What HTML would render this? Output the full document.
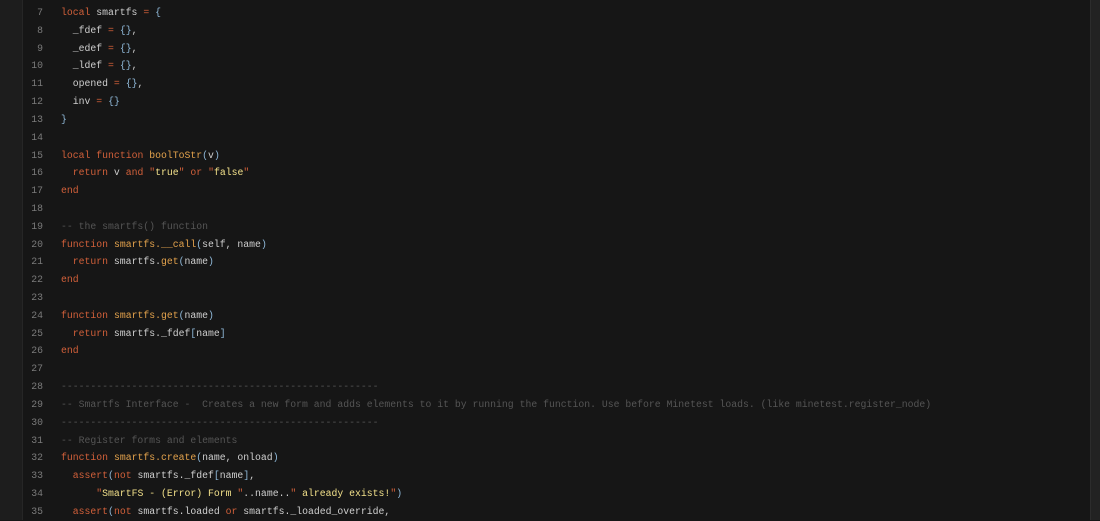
<!DOCTYPE html>
<html><head><meta charset="utf-8"><style>
html,body{margin:0;padding:0;width:1100px;height:520px;overflow:hidden;background:#161616;}
.l{position:absolute;left:0;top:0;width:22px;height:520px;background:#1d1d1d;border-right:1px solid #262626}
.r{position:absolute;left:1090px;top:0;width:10px;height:520px;background:#222;border-left:1px solid #2c2c2c}
.code{position:absolute;left:0;top:4px;font-family:"Liberation Mono",monospace;font-size:9.8px;line-height:17.82px;color:#cfcfcf;white-space:pre}
.n{display:inline-block;width:43px;text-align:right;color:#7a7a7a;margin-right:18px}
.k{color:#d2603a}.f{color:#e3a24c}.p{color:#8fb8d8}.s{color:#f2e08a}.q{color:#d2603a}.c{color:#555}.o{color:#d2603a}
</style></head><body>
<div class="l"></div><div class="r"></div>
<div class="code"><span class="n">7</span><span class="k">local</span> smartfs <span class="o">=</span> <span class="p">{</span>
<span class="n">8</span>  _fdef <span class="o">=</span> <span class="p">{}</span>,
<span class="n">9</span>  _edef <span class="o">=</span> <span class="p">{}</span>,
<span class="n">10</span>  _ldef <span class="o">=</span> <span class="p">{}</span>,
<span class="n">11</span>  opened <span class="o">=</span> <span class="p">{}</span>,
<span class="n">12</span>  inv <span class="o">=</span> <span class="p">{}</span>
<span class="n">13</span><span class="p">}</span>
<span class="n">14</span>
<span class="n">15</span><span class="k">local</span> <span class="k">function</span> <span class="f">boolToStr</span><span class="p">(</span>v<span class="p">)</span>
<span class="n">16</span>  <span class="k">return</span> v <span class="k">and</span> <span class="q">"</span><span class="s">true</span><span class="q">"</span> <span class="k">or</span> <span class="q">"</span><span class="s">false</span><span class="q">"</span>
<span class="n">17</span><span class="k">end</span>
<span class="n">18</span>
<span class="n">19</span><span class="c">-- the smartfs() function</span>
<span class="n">20</span><span class="k">function</span> <span class="f">smartfs.__call</span><span class="p">(</span>self, name<span class="p">)</span>
<span class="n">21</span>  <span class="k">return</span> smartfs.<span class="f">get</span><span class="p">(</span>name<span class="p">)</span>
<span class="n">22</span><span class="k">end</span>
<span class="n">23</span>
<span class="n">24</span><span class="k">function</span> <span class="f">smartfs.get</span><span class="p">(</span>name<span class="p">)</span>
<span class="n">25</span>  <span class="k">return</span> smartfs._fdef<span class="p">[</span>name<span class="p">]</span>
<span class="n">26</span><span class="k">end</span>
<span class="n">27</span>
<span class="n">28</span><span class="c">------------------------------------------------------</span>
<span class="n">29</span><span class="c">-- Smartfs Interface -  Creates a new form and adds elements to it by running the function. Use before Minetest loads. (like minetest.register_node)</span>
<span class="n">30</span><span class="c">------------------------------------------------------</span>
<span class="n">31</span><span class="c">-- Register forms and elements</span>
<span class="n">32</span><span class="k">function</span> <span class="f">smartfs.create</span><span class="p">(</span>name, onload<span class="p">)</span>
<span class="n">33</span>  <span class="k">assert</span><span class="p">(</span><span class="k">not</span> smartfs._fdef<span class="p">[</span>name<span class="p">]</span>,
<span class="n">34</span>      <span class="q">"</span><span class="s">SmartFS - (Error) Form </span><span class="q">"</span>..name..<span class="q">"</span><span class="s"> already exists!</span><span class="q">"</span><span class="p">)</span>
<span class="n">35</span>  <span class="k">assert</span><span class="p">(</span><span class="k">not</span> smartfs.loaded <span class="k">or</span> smartfs._loaded_override,
</div>
</body></html>
